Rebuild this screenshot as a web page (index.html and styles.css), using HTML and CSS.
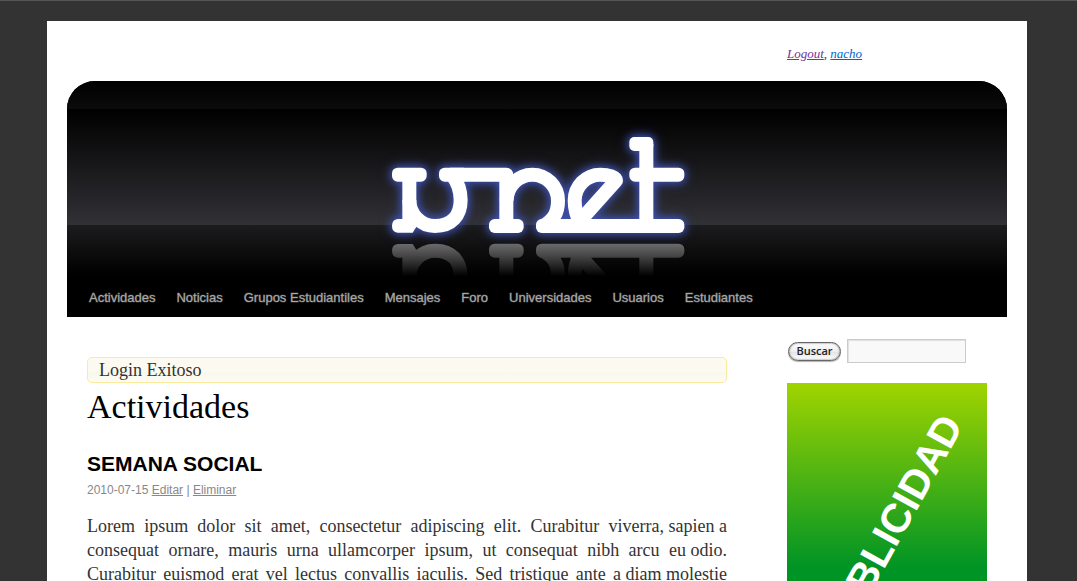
FILE: index.html
```html
<!DOCTYPE html>
<html lang="es">
<head>
<meta charset="utf-8">
<meta name="viewport" content="width=device-width, initial-scale=1">
<title>unet - Actividades</title>
<link rel="stylesheet" href="styles.css">
</head>
<body>
<div class="site">
  <div class="session"><p class="session-links"><a class="visited" href="#logout">Logout</a>, <a href="#nacho">nacho</a></p></div>
  <header class="header">
    <div class="banner">
      <svg class="logo" viewBox="-9 0 1020 495" role="img" aria-label="unet">
        <defs>
          <g id="mark">
            <g fill="#fff">
              <rect x="66" y="143" width="104" height="42" rx="17"/>
              <path d="M83 297H138V322L128 338H83Q66 336 66 318Q66 299 83 297Z"/>
              <rect x="207" y="143" width="90" height="42" rx="17"/>
              <rect x="357" y="297" width="104" height="42" rx="17"/>
              <rect x="498" y="297" width="445" height="42" rx="17"/>
              <rect x="778" y="51" width="72" height="42" rx="15"/>
              <rect x="778" y="143" width="165" height="42" rx="17"/>
            </g>
            <g fill="none" stroke="#fff" stroke-width="42" stroke-linejoin="round">
              <path d="M118 164V318"/>
              <path d="M118 240A77 78 0 0 0 195 318C245 318 272 286 272 240C272 205 262 185 246 164"/>
              <path d="M240 164H409V318"/>
              <path d="M410 242A77 78 0 0 1 487 164A77 78 0 0 1 564 242C564 280 550 300 519 318"/>
              <path d="M632 312C618 285 614 265 614 242A77 78 0 0 1 691 164C715 164 738 172 738 182L636 296L650 318"/>
              <path d="M829 72V318"/>
            </g>
          </g>
          <linearGradient id="fade" gradientUnits="userSpaceOnUse" x1="0" y1="372" x2="0" y2="470">
            <stop offset="0" stop-color="#fff" stop-opacity=".38"/>
            <stop offset="1" stop-color="#fff" stop-opacity="0"/>
          </linearGradient>
          <mask id="fade-mask" maskUnits="userSpaceOnUse" x="0" y="360" width="1020" height="120">
            <rect x="0" y="360" width="1020" height="120" fill="url(#fade)"/>
          </mask>
        </defs>
        <g mask="url(#fade-mask)"><use href="#mark" transform="translate(0 710) scale(1 -1)"/></g>
        <g class="glow"><use href="#mark"/></g>
      </svg>
    </div>
    <nav class="nav">
      <a href="#actividades">Actividades</a>
      <a href="#noticias">Noticias</a>
      <a href="#grupos">Grupos Estudiantiles</a>
      <a href="#mensajes">Mensajes</a>
      <a href="#foro">Foro</a>
      <a href="#universidades">Universidades</a>
      <a href="#usuarios">Usuarios</a>
      <a href="#estudiantes">Estudiantes</a>
    </nav>
  </header>
  <div class="columns">
    <main class="content">
      <p class="notice">Login Exitoso</p>
      <h1>Actividades</h1>
      <article>
        <h2>SEMANA SOCIAL</h2>
        <p class="meta">2010-07-15 <a href="#editar">Editar</a> | <a href="#eliminar">Eliminar</a></p>
        <p class="text">Lorem ipsum dolor sit amet, consectetur adipiscing elit. Curabitur <span class="keep">viverra, sapien a</span><br>
        consequat ornare, mauris urna ullamcorper ipsum, ut consequat nibh arcu <span class="keep">eu odio.</span><br>
        Curabitur euismod erat vel lectus convallis iaculis. Sed tristique ante <span class="keep">a diam molestie</span></p>
      </article>
    </main>
    <aside class="sidebar">
      <form class="search">
        <button type="button">Buscar</button>
        <input type="text" aria-label="Buscar">
      </form>
      <svg class="ad" viewBox="0 0 200 300" role="img" aria-label="Publicidad">
        <defs>
          <linearGradient id="lime" gradientUnits="userSpaceOnUse" x1="0" y1="0" x2="0" y2="184">
            <stop offset="0" stop-color="#a0d400"/>
            <stop offset="1" stop-color="#009425"/>
          </linearGradient>
        </defs>
        <rect width="200" height="300" fill="url(#lime)"/>
        <text class="ad-text" text-anchor="end" transform="translate(177 42) rotate(-61)">PUBLICIDAD</text>
      </svg>
    </aside>
  </div>
</div>
</body>
</html>
```
FILE: styles.css
```css
* {
  box-sizing: border-box;
}

body {
  margin: 0;
  padding: 20px 48px 0 45px;
  background: #333;
  border-top: 1px solid #555;
  color: #333;
  font: 18px/24px "Liberation Serif", Georgia, serif;
}

h1, h2, p {
  margin: 0;
}

.site {
  max-width: 980px;
  margin: 0 auto;
  padding: 0 20px;
  background: #fff;
}

.session {
  display: flex;
  justify-content: flex-end;
  height: 60px;
  padding: 21px 20px 0 0;
}

.session-links {
  width: 200px;
  font-size: 13px;
  font-style: italic;
}

.session-links a {
  color: #0066cc;
}

.session-links .visited {
  color: #743399;
}

.header {
  overflow: hidden;
  border-radius: 28px 28px 0 0;
  background: #000;
}

.banner {
  display: flex;
  justify-content: center;
  height: 198px;
  padding-top: 39px;
  background: linear-gradient(#000 0, #0b0b0b 28px, #000 28px, #313136 144px, #1c1c1e 144px, #000 194px);
}

.logo {
  flex: none;
  width: 340px;
  height: 165px;
}

.glow {
  filter: drop-shadow(0 0 12px #4054b8) drop-shadow(0 0 14px #4054b8a0);
}

.nav {
  display: flex;
  gap: 21px;
  padding: 0 22px;
  font: 13px/38px "Liberation Sans", Helvetica, sans-serif;
}

.nav a {
  color: #aaa;
  text-decoration: none;
  -webkit-text-stroke: 1px #aaaaaa60;
}

.columns {
  display: flex;
  gap: 60px;
  padding: 0 20px;
}

.content {
  flex: 1;
  padding-top: 40px;
}

.notice {
  padding: 0 11px;
  border: 1px solid #faec9a;
  border-radius: 5px;
  background: linear-gradient(#fdfaf0, #fbfaf1 60%, #f8f8ec 60%, #fcfcf6);
}

h1 {
  color: #000;
  font-size: 34px;
  font-weight: 400;
  line-height: 48px;
}

h2 {
  padding-top: 19px;
  color: #000;
  font: bold 21px/28px "Liberation Sans", Helvetica, sans-serif;
}

.meta {
  color: #888;
  font: 12px/24px "Liberation Sans", Helvetica, sans-serif;
}

.meta a {
  color: #888;
}

.text {
  padding-top: 12px;
  text-align: justify;
  text-align-last: justify;
}

.keep {
  display: inline-block;
}

.sidebar {
  width: 200px;
  padding-top: 22px;
}

.search {
  display: flex;
  align-items: center;
  gap: 6px;
  padding-left: 1px;
}

.search button {
  width: 53px;
  height: 19px;
  padding: 0;
  border: 1px solid #666;
  border-radius: 10px;
  background: linear-gradient(#fff, #eee 50%, #e2e2e2 50%, #fff);
  box-shadow: inset 0 0 2px #555, 0 1px 1px #0000004d;
  color: #222;
  font: 600 11px/14px "Open Sans", sans-serif;
}

.search input {
  width: 119px;
  height: 24px;
  border: 1px solid #ccc;
  background: #f9f9f9;
  box-shadow: inset 1px 1px 1px #0000001a;
}

.ad {
  display: block;
  width: 100%;
  margin-top: 20px;
}

.ad-text {
  fill: #fff;
  font: bold 41px "Liberation Sans", Helvetica, sans-serif;
}
```
